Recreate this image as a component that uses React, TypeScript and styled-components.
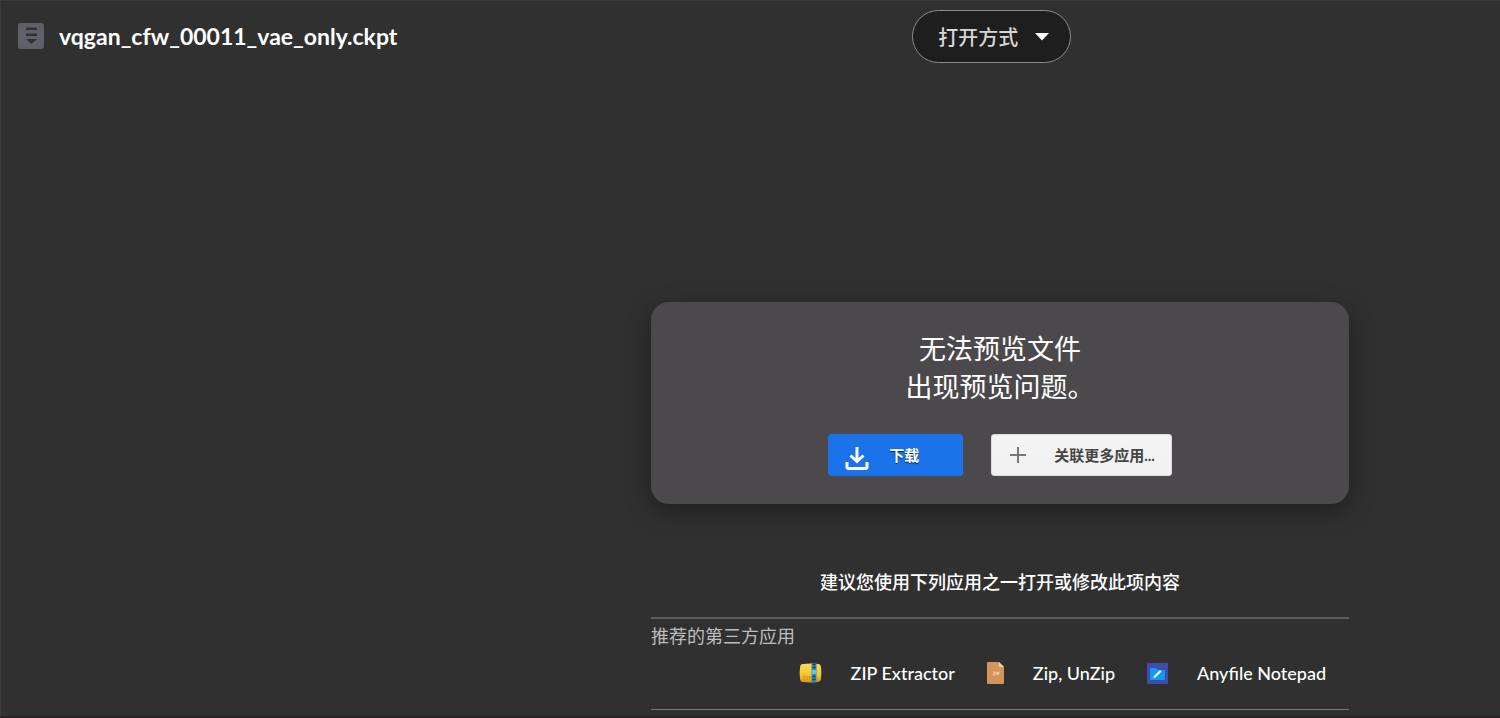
import React from "react";
import styled, { createGlobalStyle } from "styled-components";

const GlobalStyle = createGlobalStyle`
  *, *::before, *::after { box-sizing: border-box; }
  html, body { margin: 0; background: #303030; }
  body {
    color: #fff;
    font-family: Lato, "Noto Sans CJK SC", sans-serif;
    -webkit-font-smoothing: antialiased;
  }
  button { font-family: inherit; cursor: pointer; }
`;

const Page = styled.div`
  display: flex;
  flex-direction: column;
  min-height: 100vh;
  border-top: 1px solid #3c3c3c;
  border-left: 1px solid #3c3c3c;
  border-bottom: 2px solid #2c2327;
`;

const Header = styled.header`
  display: grid;
  grid-template-columns: 31fr 20fr;
  align-items: center;
  padding-top: 9px;
`;

const FileTitle = styled.div`
  display: flex;
  align-items: center;
  gap: 15px;
  min-width: 0;
  padding: 0 0 2px 17px;
`;

const FileName = styled.h1`
  margin: 0;
  font-size: 23px;
  line-height: 30px;
  font-weight: 700;
  white-space: nowrap;
`;

const OpenWithButton = styled.button`
  display: flex;
  align-items: center;
  justify-self: start;
  gap: 17px;
  height: 53px;
  padding: 0 21px 0 25px;
  border: 1px solid #8c8c8c;
  border-radius: 27px;
  background: #1e1e1e;
  color: #d6d6d6;
  font-size: 20px;
  line-height: 30px;
  font-weight: 500;
`;

const Main = styled.main`
  display: flex;
  flex-direction: column;
  align-items: center;
  margin-left: 33.3%;
  padding: 239px 16px 0;
`;

const PreviewCard = styled.section`
  display: flex;
  flex-direction: column;
  align-items: center;
  width: 100%;
  max-width: 698px;
  padding: 28px 16px;
  border-radius: 18px;
  background: #4c494c;
  box-shadow: 0 8px 24px rgba(0, 0, 0, 0.35);
`;

const Message = styled.p`
  margin: 0;
  font-size: 27px;
  line-height: 38px;
  text-align: center;
`;

const Actions = styled.div`
  display: flex;
  flex-wrap: wrap;
  justify-content: center;
  gap: 28px;
  margin-top: 28px;
`;

const ActionButton = styled.button<{ $primary?: boolean }>`
  display: flex;
  align-items: center;
  gap: ${(p) => (p.$primary ? "20px" : "26px")};
  height: 42px;
  padding: ${(p) => (p.$primary ? "0 43px 0 16px" : "0 16px")};
  border: 1px solid ${(p) => (p.$primary ? "#1a73e8" : "#dcdcdc")};
  border-radius: 3px;
  background: ${(p) => (p.$primary ? "#1a73e8" : "linear-gradient(#f5f5f5, #f0f0f0)")};
  color: ${(p) => (p.$primary ? "#fff" : "#444")};
  text-shadow: ${(p) => (p.$primary ? "0 1px 1px rgba(0, 0, 0, 0.7)" : "none")};
  font-size: 15px;
  line-height: 24px;
  font-weight: 700;
  white-space: nowrap;
`;

const Suggestions = styled.section`
  width: 100%;
  max-width: 698px;
  margin-top: 63px;
`;

const SuggestionText = styled.p`
  margin: 0 0 20px;
  font-size: 18px;
  line-height: 30px;
  font-weight: 500;
  text-align: center;
`;

const AppsPanel = styled.div`
  border-top: 2px solid #5c5c5c;
  border-bottom: 1px solid #7a7a7a;
  padding: 2px 0 22px;
`;

const AppsHeading = styled.h2`
  margin: 0;
  color: #bdbdbd;
  font-size: 18px;
  line-height: 30px;
  font-weight: 400;
`;

const AppList = styled.ul`
  display: flex;
  flex-wrap: wrap;
  justify-content: flex-end;
  gap: 32px;
  margin: 8px 0 0;
  padding: 0 23px 0 0;
  list-style: none;
`;

const AppLink = styled.a`
  display: flex;
  align-items: center;
  gap: 29px;
  color: #fff;
  font-size: 18px;
  line-height: 28px;
  font-weight: 500;
  text-decoration: none;
  white-space: nowrap;
`;

const FileIcon = () => (
  <svg width="26" height="26" viewBox="0 0 26 26" aria-hidden="true">
    <rect width="26" height="26" rx="3" fill="#5f6069" />
    <path d="M8 4.500h11v2.500H8zM8 10.500h11v2.500H8zM8 16h11l-5.500 5z" fill="#303138" />
  </svg>
);

const CaretIcon = () => (
  <svg width="14" height="8" viewBox="0 0 14 8" aria-hidden="true">
    <path d="M0 0h14L7 7.500z" fill="#fff" />
  </svg>
);

const DownloadIcon = () => (
  <svg width="24" height="30" viewBox="0 -6 24 30" fill="none" stroke="#fff" strokeWidth="3" aria-hidden="true">
    <path d="M12 1v14M5.500 9.500l6.500 6 6.500-6" />
    <path d="M2 16v5q0 1.500 1.500 1.500h17q1.500 0 1.500-1.500v-5" />
  </svg>
);

const PlusIcon = () => (
  <svg width="20" height="20" viewBox="0 0 20 20" fill="none" stroke="#777" strokeWidth="2" aria-hidden="true">
    <path d="M10 2v16M2 10h16" />
  </svg>
);

const ZipExtractorIcon = () => (
  <svg width="23" height="22" viewBox="0 0 23 22" aria-hidden="true">
    <defs>
      <linearGradient id="zipBody" x1="0" y1="0" x2="0" y2="1">
        <stop offset="0" stopColor="#f9dc5c" />
        <stop offset="0.6" stopColor="#f7c52f" />
        <stop offset="1" stopColor="#d9981a" />
      </linearGradient>
    </defs>
    <path d="M4 2Q11 1 19 2q3 0 3 4 .8 5 0 10 0 4-4 4-7 .8-14 0-3 0-3-4-.8-5 0-10 0-4 3-4z" fill="url(#zipBody)" />
    <path d="M12.500 1.500h5v19h-5z" fill="#2a8fae" />
    <path d="M13.500 2.500h3M13.500 5.500h3M13.500 14.500h3M13.500 17.500h3" stroke="#16445c" strokeWidth="1.500" />
    <path d="M13 8h4v4h-4z" fill="#5cc9d8" />
    <path d="M4 14h3l-3 4h3M8.500 14v4M10.500 18v-4h1v2h-1" fill="none" stroke="#c8961f" strokeWidth="0.800" />
  </svg>
);

const UnzipIcon = () => (
  <svg width="17" height="22" viewBox="0 0 17 22" aria-hidden="true">
    <path d="M1 0h11l5 5v16q0 1-1 1H1q-1 0-1-1V1q0-1 1-1z" fill="#d3955b" />
    <path d="M12 0l5 5h-4q-1 0-1-1z" fill="#efd0ad" />
    <path d="M6 10h2l-2 3h2M9 10v3M10.500 13v-3h1.500v1.500h-1.500" fill="none" stroke="#f2dcc4" strokeWidth="0.800" />
  </svg>
);

const NotepadIcon = () => (
  <svg width="21" height="21" viewBox="0 0 21 21" aria-hidden="true">
    <rect width="21" height="21" rx="1" fill="#3f4bae" />
    <path d="M3 6q0-1 1-1h5l2 2h7v9q0 1-1 1H4q-1 0-1-1z" fill="#109bea" />
    <path d="M6.500 15l.5-2 6-6 1.500 1.500-6 6z" fill="#fff" />
  </svg>
);

const apps = [
  { name: "ZIP Extractor", Icon: ZipExtractorIcon },
  { name: "Zip, UnZip", Icon: UnzipIcon },
  { name: "Anyfile Notepad", Icon: NotepadIcon },
];

export default function App() {
  return (
    <>
      <GlobalStyle />
      <Page>
        <Header>
          <FileTitle>
            <FileIcon />
            <FileName>vqgan_cfw_00011_vae_only.ckpt</FileName>
          </FileTitle>
          <OpenWithButton type="button">
            打开方式
            <CaretIcon />
          </OpenWithButton>
        </Header>
        <Main>
          <PreviewCard>
            <Message>
              无法预览文件
              <br />
              出现预览问题。
            </Message>
            <Actions>
              <ActionButton type="button" $primary>
                <DownloadIcon />
                下载
              </ActionButton>
              <ActionButton type="button">
                <PlusIcon />
                关联更多应用...
              </ActionButton>
            </Actions>
          </PreviewCard>
          <Suggestions>
            <SuggestionText>建议您使用下列应用之一打开或修改此项内容</SuggestionText>
            <AppsPanel>
              <AppsHeading>推荐的第三方应用</AppsHeading>
              <AppList>
                {apps.map(({ name, Icon }) => (
                  <li key={name}>
                    <AppLink href="#">
                      <Icon />
                      {name}
                    </AppLink>
                  </li>
                ))}
              </AppList>
            </AppsPanel>
          </Suggestions>
        </Main>
      </Page>
    </>
  );
}
